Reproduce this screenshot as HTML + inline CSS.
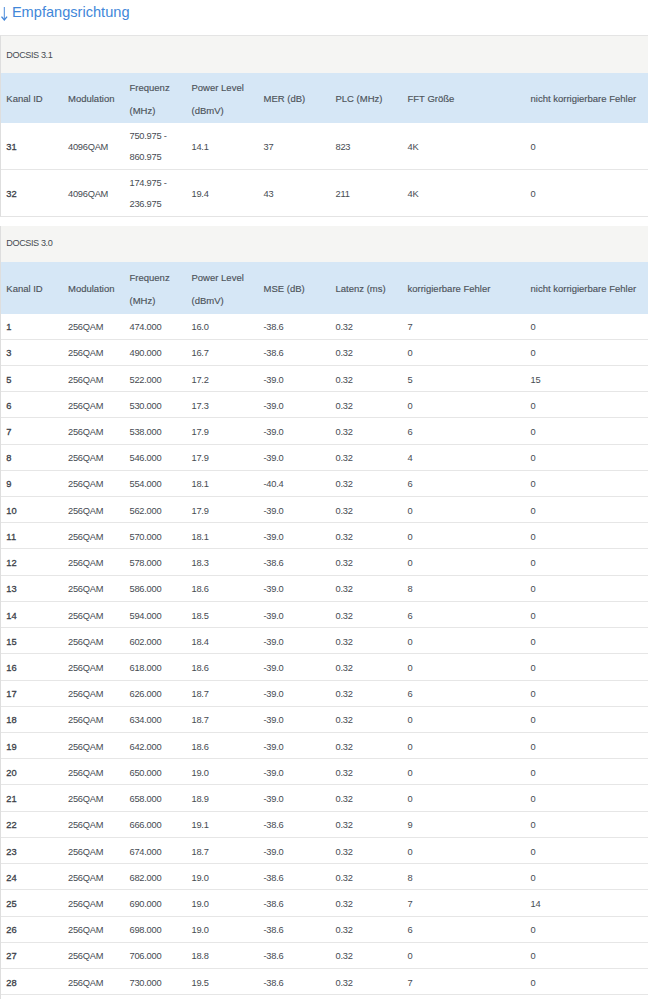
<!DOCTYPE html>
<html><head><meta charset="utf-8"><style>
html,body{margin:0;padding:0;background:#fff;width:648px;height:999px;overflow:hidden;position:relative}
body{font-family:"Liberation Sans",sans-serif;color:#3b4048}
.title{position:absolute;left:11.9px;top:1px;font-size:14.6px;color:#4287d9;white-space:nowrap;line-height:22px}
.arrow{position:absolute;left:0;top:0}
.box{position:absolute;left:0;width:700px;border:1px solid #e3e3e3;border-left-color:#d9d9d9;box-sizing:border-box;z-index:5}
.cap{position:absolute;left:0;width:700px;background:#f5f5f3}
.cap span{position:absolute;left:6.3px;top:50%;transform:translateY(-50%);font-size:9.1px;line-height:12px;white-space:nowrap;letter-spacing:-0.4px}
.hdr{position:absolute;left:0;width:700px;background:#d6e7f6}
.row2,.row1{position:absolute;left:0;width:700px;background:#fff;box-sizing:border-box;border-bottom:1px solid #e6e6e6}
.row2.last{border-bottom:none}
.c{position:absolute;top:50%;transform:translateY(calc(-50% + 1.1px));font-size:9.3px;white-space:nowrap;line-height:23px;letter-spacing:-0.25px}
.c0{font-weight:normal;letter-spacing:0.1px;-webkit-text-stroke:0.3px #3b4048}
.hdr .c{color:#4d535a;font-size:9.5px;letter-spacing:0;transform:translateY(calc(-50% + 0.6px));font-weight:normal}
.row1 .c{line-height:12px}
.row2 .c{line-height:21px;transform:translateY(calc(-50% + 1.4px))}
.row2 .c0{transform:translateY(calc(-50% + 1.4px))}
.hdr .c{-webkit-text-stroke:0.15px #4d535a}
.row1 .c:not(.c0),.row2 .c:not(.c0){color:#464b52}
.box{border-color:#e4e4e4;border-left-color:#dedede}
.cap span{color:#464b52}

</style></head><body>
<svg class="arrow" width="10" height="24" viewBox="0 0 10 24"><path d="M4.3 7 V19" stroke="#4a8bdb" stroke-width="1" fill="none"/><path d="M1.5 16.6 L4.3 19.9 L7.1 16.6" stroke="#3f83d8" stroke-width="1.3" fill="none" stroke-linejoin="miter"/></svg>
<div class="title">Empfangsrichtung</div>
<div class="box" style="top:35px;height:182px"></div>
<div class="cap" style="top:36px;height:36.5px"><span style="margin-top:0.7px">DOCSIS 3.1</span></div>
<div class="hdr" style="top:72.5px;height:50.5px"><div class="c c0" style="left:6.3px">Kanal ID</div><div class="c" style="left:68px">Modulation</div><div class="c" style="left:129.5px">Frequenz<br>(MHz)</div><div class="c" style="left:191.5px">Power Level<br>(dBmV)</div><div class="c" style="left:263.5px">MER (dB)</div><div class="c" style="left:335.5px">PLC (MHz)</div><div class="c" style="left:407.5px">FFT Größe</div><div class="c" style="left:530.5px">nicht korrigierbare Fehler</div></div>
<div class="row2" style="top:123px;height:46.5px"><div class="c c0" style="left:6.3px">31</div><div class="c" style="left:68px">4096QAM</div><div class="c" style="left:129.5px">750.975 -<br>860.975</div><div class="c" style="left:191.5px">14.1</div><div class="c" style="left:263.5px">37</div><div class="c" style="left:335.5px">823</div><div class="c" style="left:407.5px">4K</div><div class="c" style="left:530.5px">0</div></div>
<div class="row2 last" style="top:169.5px;height:46.5px"><div class="c c0" style="left:6.3px">32</div><div class="c" style="left:68px">4096QAM</div><div class="c" style="left:129.5px">174.975 -<br>236.975</div><div class="c" style="left:191.5px">19.4</div><div class="c" style="left:263.5px">43</div><div class="c" style="left:335.5px">211</div><div class="c" style="left:407.5px">4K</div><div class="c" style="left:530.5px">0</div></div>
<div class="box" style="top:226px;height:800px;border-top:none"></div>
<div class="cap" style="top:226px;height:36px"><span style="margin-top:-0.6px">DOCSIS 3.0</span></div>
<div class="hdr" style="top:262px;height:51.5px"><div class="c c0" style="left:6.3px">Kanal ID</div><div class="c" style="left:68px">Modulation</div><div class="c" style="left:129.5px">Frequenz<br>(MHz)</div><div class="c" style="left:191.5px">Power Level<br>(dBmV)</div><div class="c" style="left:263.5px">MSE (dB)</div><div class="c" style="left:335.5px">Latenz (ms)</div><div class="c" style="left:407.5px">korrigierbare Fehler</div><div class="c" style="left:530.5px">nicht korrigierbare Fehler</div></div>
<div class="row1" style="top:313.50px;height:26.22px"><div class="c c0" style="left:6.3px">1</div><div class="c" style="left:68px">256QAM</div><div class="c" style="left:129.5px">474.000</div><div class="c" style="left:191.5px">16.0</div><div class="c" style="left:263.5px">-38.6</div><div class="c" style="left:335.5px">0.32</div><div class="c" style="left:407.5px">7</div><div class="c" style="left:530.5px">0</div></div>
<div class="row1" style="top:339.72px;height:26.22px"><div class="c c0" style="left:6.3px">3</div><div class="c" style="left:68px">256QAM</div><div class="c" style="left:129.5px">490.000</div><div class="c" style="left:191.5px">16.7</div><div class="c" style="left:263.5px">-38.6</div><div class="c" style="left:335.5px">0.32</div><div class="c" style="left:407.5px">0</div><div class="c" style="left:530.5px">0</div></div>
<div class="row1" style="top:365.94px;height:26.22px"><div class="c c0" style="left:6.3px">5</div><div class="c" style="left:68px">256QAM</div><div class="c" style="left:129.5px">522.000</div><div class="c" style="left:191.5px">17.2</div><div class="c" style="left:263.5px">-39.0</div><div class="c" style="left:335.5px">0.32</div><div class="c" style="left:407.5px">5</div><div class="c" style="left:530.5px">15</div></div>
<div class="row1" style="top:392.16px;height:26.22px"><div class="c c0" style="left:6.3px">6</div><div class="c" style="left:68px">256QAM</div><div class="c" style="left:129.5px">530.000</div><div class="c" style="left:191.5px">17.3</div><div class="c" style="left:263.5px">-39.0</div><div class="c" style="left:335.5px">0.32</div><div class="c" style="left:407.5px">0</div><div class="c" style="left:530.5px">0</div></div>
<div class="row1" style="top:418.38px;height:26.22px"><div class="c c0" style="left:6.3px">7</div><div class="c" style="left:68px">256QAM</div><div class="c" style="left:129.5px">538.000</div><div class="c" style="left:191.5px">17.9</div><div class="c" style="left:263.5px">-39.0</div><div class="c" style="left:335.5px">0.32</div><div class="c" style="left:407.5px">6</div><div class="c" style="left:530.5px">0</div></div>
<div class="row1" style="top:444.60px;height:26.22px"><div class="c c0" style="left:6.3px">8</div><div class="c" style="left:68px">256QAM</div><div class="c" style="left:129.5px">546.000</div><div class="c" style="left:191.5px">17.9</div><div class="c" style="left:263.5px">-39.0</div><div class="c" style="left:335.5px">0.32</div><div class="c" style="left:407.5px">4</div><div class="c" style="left:530.5px">0</div></div>
<div class="row1" style="top:470.82px;height:26.22px"><div class="c c0" style="left:6.3px">9</div><div class="c" style="left:68px">256QAM</div><div class="c" style="left:129.5px">554.000</div><div class="c" style="left:191.5px">18.1</div><div class="c" style="left:263.5px">-40.4</div><div class="c" style="left:335.5px">0.32</div><div class="c" style="left:407.5px">6</div><div class="c" style="left:530.5px">0</div></div>
<div class="row1" style="top:497.04px;height:26.22px"><div class="c c0" style="left:6.3px">10</div><div class="c" style="left:68px">256QAM</div><div class="c" style="left:129.5px">562.000</div><div class="c" style="left:191.5px">17.9</div><div class="c" style="left:263.5px">-39.0</div><div class="c" style="left:335.5px">0.32</div><div class="c" style="left:407.5px">0</div><div class="c" style="left:530.5px">0</div></div>
<div class="row1" style="top:523.26px;height:26.22px"><div class="c c0" style="left:6.3px">11</div><div class="c" style="left:68px">256QAM</div><div class="c" style="left:129.5px">570.000</div><div class="c" style="left:191.5px">18.1</div><div class="c" style="left:263.5px">-39.0</div><div class="c" style="left:335.5px">0.32</div><div class="c" style="left:407.5px">0</div><div class="c" style="left:530.5px">0</div></div>
<div class="row1" style="top:549.48px;height:26.22px"><div class="c c0" style="left:6.3px">12</div><div class="c" style="left:68px">256QAM</div><div class="c" style="left:129.5px">578.000</div><div class="c" style="left:191.5px">18.3</div><div class="c" style="left:263.5px">-38.6</div><div class="c" style="left:335.5px">0.32</div><div class="c" style="left:407.5px">0</div><div class="c" style="left:530.5px">0</div></div>
<div class="row1" style="top:575.70px;height:26.22px"><div class="c c0" style="left:6.3px">13</div><div class="c" style="left:68px">256QAM</div><div class="c" style="left:129.5px">586.000</div><div class="c" style="left:191.5px">18.6</div><div class="c" style="left:263.5px">-39.0</div><div class="c" style="left:335.5px">0.32</div><div class="c" style="left:407.5px">8</div><div class="c" style="left:530.5px">0</div></div>
<div class="row1" style="top:601.92px;height:26.22px"><div class="c c0" style="left:6.3px">14</div><div class="c" style="left:68px">256QAM</div><div class="c" style="left:129.5px">594.000</div><div class="c" style="left:191.5px">18.5</div><div class="c" style="left:263.5px">-39.0</div><div class="c" style="left:335.5px">0.32</div><div class="c" style="left:407.5px">6</div><div class="c" style="left:530.5px">0</div></div>
<div class="row1" style="top:628.14px;height:26.22px"><div class="c c0" style="left:6.3px">15</div><div class="c" style="left:68px">256QAM</div><div class="c" style="left:129.5px">602.000</div><div class="c" style="left:191.5px">18.4</div><div class="c" style="left:263.5px">-39.0</div><div class="c" style="left:335.5px">0.32</div><div class="c" style="left:407.5px">0</div><div class="c" style="left:530.5px">0</div></div>
<div class="row1" style="top:654.36px;height:26.22px"><div class="c c0" style="left:6.3px">16</div><div class="c" style="left:68px">256QAM</div><div class="c" style="left:129.5px">618.000</div><div class="c" style="left:191.5px">18.6</div><div class="c" style="left:263.5px">-39.0</div><div class="c" style="left:335.5px">0.32</div><div class="c" style="left:407.5px">0</div><div class="c" style="left:530.5px">0</div></div>
<div class="row1" style="top:680.58px;height:26.22px"><div class="c c0" style="left:6.3px">17</div><div class="c" style="left:68px">256QAM</div><div class="c" style="left:129.5px">626.000</div><div class="c" style="left:191.5px">18.7</div><div class="c" style="left:263.5px">-39.0</div><div class="c" style="left:335.5px">0.32</div><div class="c" style="left:407.5px">6</div><div class="c" style="left:530.5px">0</div></div>
<div class="row1" style="top:706.80px;height:26.22px"><div class="c c0" style="left:6.3px">18</div><div class="c" style="left:68px">256QAM</div><div class="c" style="left:129.5px">634.000</div><div class="c" style="left:191.5px">18.7</div><div class="c" style="left:263.5px">-39.0</div><div class="c" style="left:335.5px">0.32</div><div class="c" style="left:407.5px">0</div><div class="c" style="left:530.5px">0</div></div>
<div class="row1" style="top:733.02px;height:26.22px"><div class="c c0" style="left:6.3px">19</div><div class="c" style="left:68px">256QAM</div><div class="c" style="left:129.5px">642.000</div><div class="c" style="left:191.5px">18.6</div><div class="c" style="left:263.5px">-39.0</div><div class="c" style="left:335.5px">0.32</div><div class="c" style="left:407.5px">0</div><div class="c" style="left:530.5px">0</div></div>
<div class="row1" style="top:759.24px;height:26.22px"><div class="c c0" style="left:6.3px">20</div><div class="c" style="left:68px">256QAM</div><div class="c" style="left:129.5px">650.000</div><div class="c" style="left:191.5px">19.0</div><div class="c" style="left:263.5px">-39.0</div><div class="c" style="left:335.5px">0.32</div><div class="c" style="left:407.5px">0</div><div class="c" style="left:530.5px">0</div></div>
<div class="row1" style="top:785.46px;height:26.22px"><div class="c c0" style="left:6.3px">21</div><div class="c" style="left:68px">256QAM</div><div class="c" style="left:129.5px">658.000</div><div class="c" style="left:191.5px">18.9</div><div class="c" style="left:263.5px">-39.0</div><div class="c" style="left:335.5px">0.32</div><div class="c" style="left:407.5px">0</div><div class="c" style="left:530.5px">0</div></div>
<div class="row1" style="top:811.68px;height:26.22px"><div class="c c0" style="left:6.3px">22</div><div class="c" style="left:68px">256QAM</div><div class="c" style="left:129.5px">666.000</div><div class="c" style="left:191.5px">19.1</div><div class="c" style="left:263.5px">-38.6</div><div class="c" style="left:335.5px">0.32</div><div class="c" style="left:407.5px">9</div><div class="c" style="left:530.5px">0</div></div>
<div class="row1" style="top:837.90px;height:26.22px"><div class="c c0" style="left:6.3px">23</div><div class="c" style="left:68px">256QAM</div><div class="c" style="left:129.5px">674.000</div><div class="c" style="left:191.5px">18.7</div><div class="c" style="left:263.5px">-39.0</div><div class="c" style="left:335.5px">0.32</div><div class="c" style="left:407.5px">0</div><div class="c" style="left:530.5px">0</div></div>
<div class="row1" style="top:864.12px;height:26.22px"><div class="c c0" style="left:6.3px">24</div><div class="c" style="left:68px">256QAM</div><div class="c" style="left:129.5px">682.000</div><div class="c" style="left:191.5px">19.0</div><div class="c" style="left:263.5px">-38.6</div><div class="c" style="left:335.5px">0.32</div><div class="c" style="left:407.5px">8</div><div class="c" style="left:530.5px">0</div></div>
<div class="row1" style="top:890.34px;height:26.22px"><div class="c c0" style="left:6.3px">25</div><div class="c" style="left:68px">256QAM</div><div class="c" style="left:129.5px">690.000</div><div class="c" style="left:191.5px">19.0</div><div class="c" style="left:263.5px">-38.6</div><div class="c" style="left:335.5px">0.32</div><div class="c" style="left:407.5px">7</div><div class="c" style="left:530.5px">14</div></div>
<div class="row1" style="top:916.56px;height:26.22px"><div class="c c0" style="left:6.3px">26</div><div class="c" style="left:68px">256QAM</div><div class="c" style="left:129.5px">698.000</div><div class="c" style="left:191.5px">19.0</div><div class="c" style="left:263.5px">-38.6</div><div class="c" style="left:335.5px">0.32</div><div class="c" style="left:407.5px">6</div><div class="c" style="left:530.5px">0</div></div>
<div class="row1" style="top:942.78px;height:26.22px"><div class="c c0" style="left:6.3px">27</div><div class="c" style="left:68px">256QAM</div><div class="c" style="left:129.5px">706.000</div><div class="c" style="left:191.5px">18.8</div><div class="c" style="left:263.5px">-38.6</div><div class="c" style="left:335.5px">0.32</div><div class="c" style="left:407.5px">0</div><div class="c" style="left:530.5px">0</div></div>
<div class="row1" style="top:969.00px;height:26.22px"><div class="c c0" style="left:6.3px">28</div><div class="c" style="left:68px">256QAM</div><div class="c" style="left:129.5px">730.000</div><div class="c" style="left:191.5px">19.5</div><div class="c" style="left:263.5px">-38.6</div><div class="c" style="left:335.5px">0.32</div><div class="c" style="left:407.5px">7</div><div class="c" style="left:530.5px">0</div></div>
</body></html>
